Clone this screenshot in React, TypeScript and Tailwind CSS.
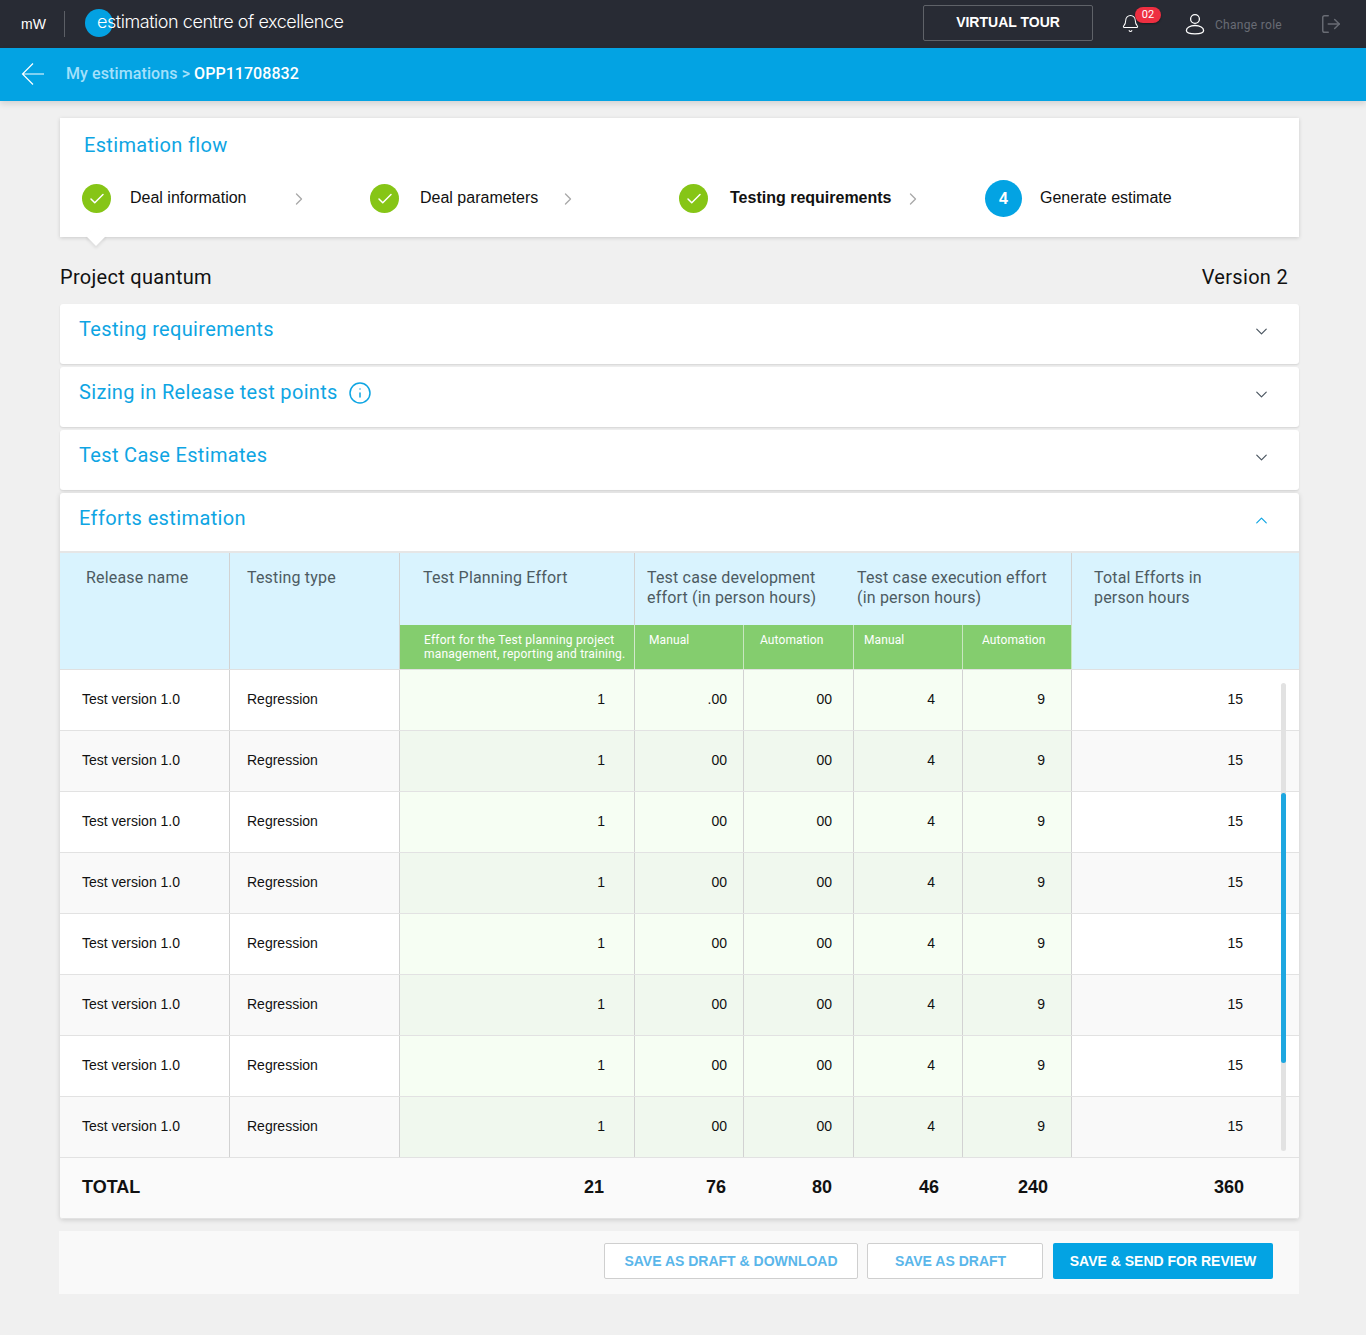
import React from 'react';
import { Bell, Check, ChevronDown, ChevronRight, ChevronUp, Info, LogOut } from 'lucide-react';

const GRID = 'grid grid-cols-[170px_170px_235px_109px_110px_109px_109px_1fr]';
const SANS = "font-['Liberation_Sans',Arial,sans-serif]";
const PLEX = "font-['Roboto',sans-serif]";

const steps = [
  { label: 'Deal information', width: 'w-[288px]', text: 'ml-[19px] w-[161px]' },
  { label: 'Deal parameters', width: 'w-[309px]', text: 'ml-[21px] w-[140px]' },
  { label: 'Testing requirements', width: 'w-[306px]', text: 'ml-[22px] w-[175px] font-bold' },
];

const subHeads = [
  { label: 'Manual', cls: 'col-start-4 pl-[14px]' },
  { label: 'Automation', cls: 'col-start-5 pl-[16px]' },
  { label: 'Manual', cls: 'col-start-6 pl-[10px]' },
  { label: 'Automation', cls: 'col-start-7 pl-[19px]' },
];

const StepCheck = () => (
  <div className="w-[29px] h-[29px] rounded-full bg-[#86c516] flex items-center justify-center shrink-0">
    <Check size={18} strokeWidth={2} className="text-white" />
  </div>
);

const Accordion = ({ title, info }: { title: string; info?: boolean }) => (
  <div className="h-[60px] mb-[3px] bg-white rounded-[3px] shadow-[0_1px_2px_rgba(0,0,0,0.12)] flex items-start justify-between pl-[19px] pr-[28px]">
    <div className={`flex items-center h-[30px] mt-[10px] text-[20px] tracking-[0.33px] text-[#0ea5e3] ${PLEX}`}>
      {title}
      {info && <Info size={24} strokeWidth={1.5} className="ml-[10px] mt-[1px]" />}
    </div>
    <ChevronDown size={19} strokeWidth={1.5} className="text-[#4a5560] mt-[18px]" />
  </div>
);

const rows = Array.from({ length: 8 });

const App: React.FC = () => {
  return (
    <div className={`min-h-[1335px] bg-[#f0f0f0] ${SANS}`}>
      {/* top bar */}
      <header className="h-[48px] bg-[#282b34] flex items-center text-white">
        <span className="ml-[21px] text-[14px] w-[25px]">mW</span>
        <span className="ml-[18px] w-px h-[26px] bg-[#5c5f66]" />
        <div className="ml-[20px] w-[28px] h-[28px] rounded-full bg-[#03a1e2] relative -mt-[2px]">
          <span className="absolute left-[12px] top-0 text-[18px] leading-[26px] whitespace-nowrap font-['Inter',sans-serif] font-light tracking-[-0.45px]">
            estimation centre of excellence
          </span>
        </div>
        <button className="ml-[810px] mb-[2px] pb-[2px] w-[170px] h-[36px] border border-[#5f6268] rounded-[2px] text-[14px] font-bold flex items-center justify-center">
          VIRTUAL TOUR
        </button>
        <div className="relative ml-[28px] w-[18px] h-[20px]">
          <Bell size={19} strokeWidth={1.3} />
          <span className={`absolute left-[14px] top-[-7px] w-[26px] h-[16px] rounded-full bg-[#ee2f41] text-[11px] leading-[16px] text-center shadow-[0_1px_2px_rgba(0,0,0,0.4)] ${PLEX}`}>
            02
          </span>
        </div>
        <svg className="ml-[46px] -mt-[1px]" width="20" height="22" viewBox="0 0 20 22" fill="none" stroke="#fff" strokeWidth="1.3">
          <circle cx="10" cy="6" r="4.4" />
          <path d="M10 12.5c-5 0-8.6 2.2-8.6 5 0 2 3.8 3.4 8.6 3.4s8.6-1.4 8.6-3.4c0-2.8-3.6-5-8.6-5z" />
        </svg>
        <span className={`ml-[10px] mt-[1px] text-[12px] text-[#696c74] tracking-[0.3px] ${PLEX}`}>Change role</span>
        <LogOut size={22} strokeWidth={1.6} className="ml-[38px] text-[#696c74]" />
      </header>

      {/* breadcrumb bar */}
      <div className="h-[53px] bg-[#03a3e3] flex items-center shadow-[0_3px_6px_rgba(0,0,0,0.12)]">
        <svg className="ml-[21px] -mt-[1px]" width="24" height="24" viewBox="0 0 24 24" fill="none" stroke="#fff" strokeWidth="1.2">
          <path d="M23 12H1.5M12 1.5 1.5 12 12 22.5" />
        </svg>
        <span className={`ml-[21px] -mt-[1px] text-[16px] font-medium tracking-[0.1px] text-[#a3e0fb] ${PLEX}`}>My estimations &gt;</span>
        <span className={`ml-[4px] -mt-[1px] text-[16px] font-medium tracking-[0.05px] text-white ${PLEX}`}>OPP11708832</span>
      </div>

      <main className="ml-[60px] w-[1239px] pt-[17px]">
        {/* estimation flow */}
        <section className="relative h-[119px] bg-white shadow-[0_1px_4px_rgba(0,0,0,0.16)]">
          <h2 className={`pl-[24px] pt-[14px] text-[20px] leading-[26px] tracking-[0.33px] text-[#0ea5e3] ${PLEX}`}>Estimation flow</h2>
          <div className="flex items-center pl-[22px] mt-[22px] h-[37px] text-[16px] text-[#111]">
            {steps.map((s) => (
              <div key={s.label} className={`flex items-center ${s.width}`}>
                <StepCheck />
                <span className={`${s.text} -mt-[1px]`}>{s.label}</span>
                <ChevronRight size={20} strokeWidth={1.6} className="text-[#a9a9a9] shrink-0 -ml-[2px]" />
              </div>
            ))}
            <div className="w-[37px] h-[37px] rounded-full bg-[#03a3e3] flex items-center justify-center text-white font-bold text-[16px]">4</div>
            <span className="ml-[18px] -mt-[1px]">Generate estimate</span>
          </div>
          <span className="absolute left-[29px] bottom-[-6px] w-[14px] h-[14px] rotate-45 bg-white shadow-[2px_2px_3px_rgba(0,0,0,0.08)]" />
        </section>

        <div className={`flex justify-between items-center h-[30px] mt-[25px] mb-[2px] pr-[11px] text-[20px] tracking-[0.3px] text-[#111] ${PLEX}`}>
          <span>Project quantum</span>
          <span>Version 2</span>
        </div>

        <div className="pt-[10px]">
          <Accordion title="Testing requirements" />
          <Accordion title="Sizing in Release test points" info />
          <Accordion title="Test Case Estimates" />
        </div>

        {/* efforts estimation */}
        <section className="relative bg-white rounded-[3px] shadow-[0_1px_5px_rgba(0,0,0,0.16)]">
          <div className="h-[60px] flex items-start justify-between pl-[19px] pr-[28px] border-b-2 border-[#e6e6e6]">
            <span className={`mt-[10px] leading-[30px] text-[20px] tracking-[0.38px] text-[#0ea5e3] ${PLEX}`}>Efforts estimation</span>
            <ChevronUp size={19} strokeWidth={1.5} className="text-[#0ea5e3] mt-[18px]" />
          </div>

          <div className={`${GRID} grid-rows-[72px_44px] bg-[#d9f3fe] border-b border-[#e0e0e0] text-[16px] leading-[20px] tracking-[0.18px] text-[#4d5b62] ${PLEX}`}>
            <div className="col-start-1 row-start-1 row-span-2 pl-[26px] pt-[15px] border-r border-[#d2d2d2]">Release name</div>
            <div className="col-start-2 row-start-1 row-span-2 pl-[17px] pt-[15px] border-r border-[#d2d2d2]">Testing type</div>
            <div className="col-start-3 row-start-1 pl-[23px] pt-[15px] border-r border-[#d2d2d2]">Test Planning Effort</div>
            <div className="col-start-4 row-start-1 col-span-2 pl-[12px] pt-[15px]">Test case development<br />effort (in person hours)</div>
            <div className="col-start-6 row-start-1 col-span-2 pl-[3px] pt-[15px] border-r border-[#d2d2d2]">Test case execution effort<br />(in person hours)</div>
            <div className="col-start-8 row-start-1 row-span-2 pl-[22px] pt-[15px]">Total Efforts in<br />person hours</div>
            <div className="col-start-3 row-start-2 bg-[#84cd6e] border-r border-[#d2e8cc] pl-[24px] pt-[8px] text-[12px] leading-[14px] tracking-[0.22px] text-white whitespace-nowrap overflow-hidden">
              Effort for the Test planning project<br />management, reporting and training.
            </div>
            {subHeads.map((h, i) => (
              <div key={i} className={`${h.cls} row-start-2 bg-[#84cd6e] text-[12px] leading-[14px] tracking-[0.1px] text-white pt-[8px] border-r border-[#c8e6c0]`}>
                {h.label}
              </div>
            ))}
          </div>

          {rows.map((_, i) => {
            const even = i % 2 === 1;
            const green = even ? 'bg-[#f0f8ee]' : 'bg-[#f6fef3]';
            const cell = 'flex items-center pb-[2px] border-r border-[#d2d2d2]';
            return (
              <div key={i} className={`${GRID} h-[61px] border-b border-[#e2e2e2] text-[14px] text-[#111] ${even ? 'bg-[#f9f9f9]' : 'bg-white'}`}>
                <div className={`${cell} pl-[22px]`}>Test version 1.0</div>
                <div className={`${cell} pl-[17px]`}>Regression</div>
                <div className={`${cell} ${green} justify-end pr-[29px]`}>1</div>
                <div className={`${cell} ${green} justify-end pr-[16px]`}>{i === 0 ? '.00' : '00'}</div>
                <div className={`${cell} ${green} justify-end pr-[21px]`}>00</div>
                <div className={`${cell} ${green} justify-end pr-[27px]`}>4</div>
                <div className={`${cell} ${green} justify-end pr-[26px]`}>9</div>
                <div className="flex items-center pb-[2px] justify-end pr-[56px]">15</div>
              </div>
            );
          })}

          <div className={`${GRID} h-[61px] pb-[2px] bg-[#fafafa] border-b border-[#e2e2e2] text-[18px] font-bold text-[#111] rounded-b-[3px]`}>
            <div className="col-span-2 flex items-center pl-[22px]">TOTAL</div>
            <div className="flex items-center justify-end pr-[31px]">21</div>
            <div className="flex items-center justify-end pr-[18px]">76</div>
            <div className="flex items-center justify-end pr-[22px]">80</div>
            <div className="flex items-center justify-end pr-[24px]">46</div>
            <div className="flex items-center justify-end pr-[24px]">240</div>
            <div className="flex items-center justify-end pr-[55px]">360</div>
          </div>

          {/* scrollbar over the rows */}
          <div className="absolute left-[1221px] top-[190px] w-[5px] h-[468px] rounded-full bg-[#e2e2e2]">
            <div className="mt-[110px] h-[270px] rounded-full bg-[#1ea7e0]" />
          </div>
        </section>

        <footer className="-ml-px w-[1240px] h-[63px] mt-[12px] bg-[#f9f9f9] flex items-start justify-end gap-[10px] pr-[26px] pt-[12px] text-[14px] font-bold">
          <button className="w-[254px] h-[36px] bg-white border border-[#cfcfcf] rounded-[2px] text-[#5ab6ea] mr-[-1px]">SAVE AS DRAFT &amp; DOWNLOAD</button>
          <button className="w-[176px] h-[36px] bg-white border border-[#cfcfcf] rounded-[2px] text-[#5ab6ea] pr-[9px]">SAVE AS DRAFT</button>
          <button className="w-[220px] h-[36px] bg-[#03a3e3] rounded-[2px] text-white">SAVE &amp; SEND FOR REVIEW</button>
        </footer>
      </main>
    </div>
  );
};

export default App;
